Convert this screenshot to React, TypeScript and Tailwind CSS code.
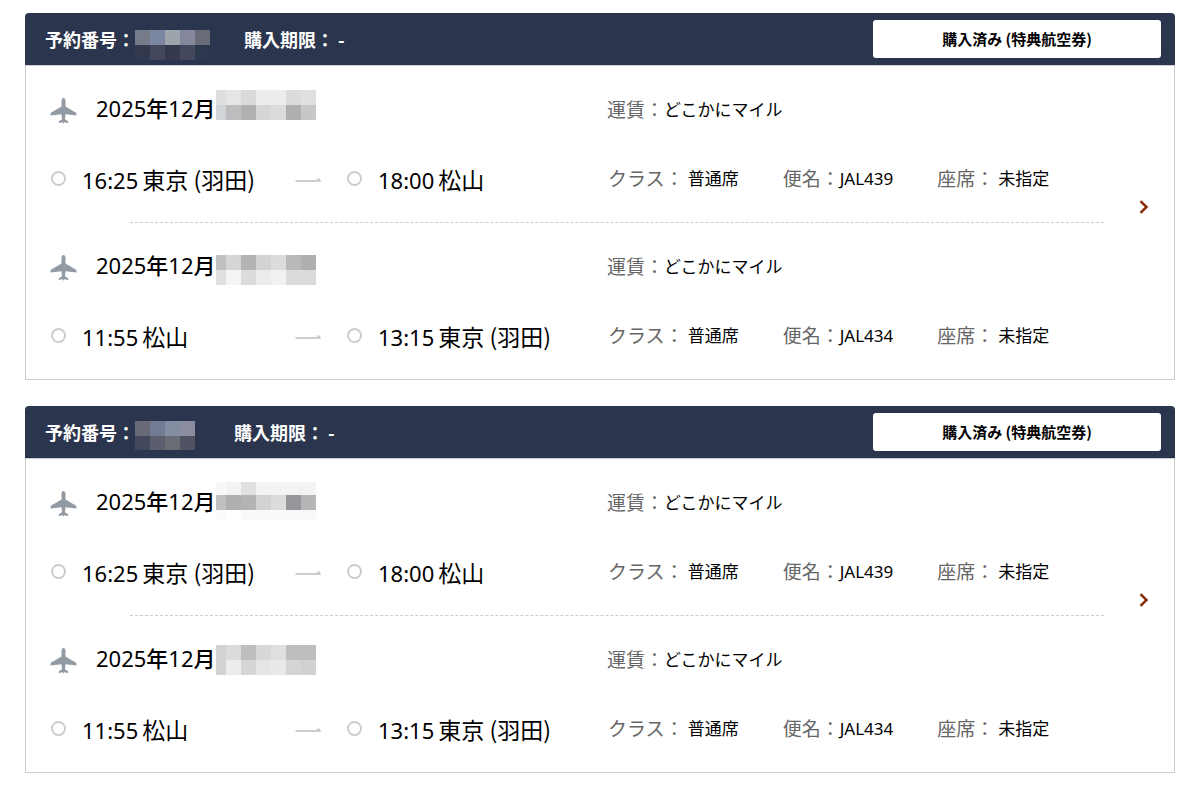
import React from "react";

type MosaicData = { cols: number[]; rows: number[]; colors: string[][]; className: string };

type Leg = {
  year: string;
  month: string;
  fare: string;
  from: string;
  departs: string;
  to: string;
  arrives: string;
  cabin: string;
  flight: string;
  seat: string;
  mask: MosaicData;
};

type Booking = { id: string; mask: MosaicData; maskWidth: string; legs: Leg[] };

const DATE_COLS = [10, 15, 15, 15, 15, 15, 15];

const outbound = {
  year: "2025",
  month: "12",
  fare: "どこかにマイル",
  departs: "16:25",
  from: "東京 (羽田)",
  arrives: "18:00",
  to: "松山",
  cabin: "普通席",
  flight: "JAL439",
  seat: "未指定",
};

const inbound = {
  year: "2025",
  month: "12",
  fare: "どこかにマイル",
  departs: "11:55",
  from: "松山",
  arrives: "13:15",
  to: "東京 (羽田)",
  cabin: "普通席",
  flight: "JAL434",
  seat: "未指定",
};

const bookings: Booking[] = [
  {
    id: "a",
    maskWidth: "w-[109px]",
    mask: {
      cols: [15, 15, 15, 15, 15],
      rows: [15, 15],
      className: "top-0",
      colors: [
        ["#757b88", "#7b87a2", "#9da4ac", "#85879d", "#686c78"],
        ["#32394e", "#43485c", "#34394d", "#43485c", "#2d374e"],
      ],
    },
    legs: [
      {
        ...outbound,
        mask: {
          cols: DATE_COLS,
          rows: [15, 15],
          className: "top-0",
          colors: [
            ["#dededf", "#e5e5e6", "#dadadb", "#ececed", "#ececed", "#dbdbdb", "#e0e0de"],
            ["#d2d5d7", "#bdbdc0", "#b2b0b3", "#d5d7d6", "#dcdcdd", "#b0aeb1", "#c5c7c8"],
          ],
        },
      },
      {
        ...inbound,
        mask: {
          cols: DATE_COLS,
          rows: [15, 15],
          className: "top-2",
          colors: [
            ["#bfc0c2", "#d5d7d6", "#b5b3b6", "#d1d4d3", "#dcdcdd", "#b9b8ba", "#b0aeb1"],
            ["#e0e1df", "#f4f4f4", "#dcdcdc", "#ececec", "#f1f1f1", "#dbdbdb", "#dbdbdb"],
          ],
        },
      },
    ],
  },
  {
    id: "b",
    maskWidth: "w-[99px]",
    mask: {
      cols: [15, 15, 15, 15],
      rows: [15, 14],
      className: "-top-0.5",
      colors: [
        ["#686b76", "#717c94", "#828da2", "#8a8da0"],
        ["#43485c", "#5b5f6d", "#6a6c75", "#505462"],
      ],
    },
    legs: [
      {
        ...outbound,
        mask: {
          cols: DATE_COLS,
          rows: [13, 15, 10],
          className: "-top-px",
          colors: [
            ["#f8f8f9", "#f3f3f3", "#e0e0de", "#f3f3f3", "#f3f3f3", "#f3f3f3", "#f3f3f3"],
            ["#bfc0c2", "#b0aeb1", "#b5b3b5", "#d1d2d4", "#dcdcdd", "#95979a", "#b7b5b8"],
            ["#fcfcfe", "#ffffff", "#f9f9f9", "#f9f9f9", "#f9f9f9", "#f9f9f9", "#f9f9f9"],
          ],
        },
      },
      {
        ...inbound,
        mask: {
          cols: DATE_COLS,
          rows: [15, 15],
          className: "top-[5px]",
          colors: [
            ["#d0d2d4", "#dbdbdb", "#bdbec0", "#d8d8d9", "#e0e0de", "#bdbec0", "#bdbec0"],
            ["#d0d2d4", "#ececec", "#d5d7d6", "#e5e5e6", "#e9e9e9", "#d4d6d5", "#d0d1d3"],
          ],
        },
      },
    ],
  },
];

const sum = (values: number[]) => values.reduce((a, b) => a + b, 0);

function Mosaic({ cols, rows, colors, className }: MosaicData) {
  const width = sum(cols);
  const height = sum(rows);
  return (
    <svg
      aria-hidden="true"
      width={width}
      height={height}
      viewBox={`0 0 ${width} ${height}`}
      shapeRendering="crispEdges"
      className={`absolute left-0 max-w-none ${className}`}
    >
      {colors.map((line, r) =>
        line.map((fill, c) => (
          <rect
            key={`${r}-${c}`}
            x={sum(cols.slice(0, c))}
            y={sum(rows.slice(0, r))}
            width={cols[c]}
            height={rows[r]}
            fill={fill}
          />
        )),
      )}
    </svg>
  );
}

function PlaneIcon() {
  return (
    <svg aria-hidden="true" width="27" height="26" viewBox="0 0 27 26" fill="#929ba3" className="mt-1.5 shrink-0">
      <path d="M13.500 0c1.200 0 2 1.400 2 3v5.600l10.200 6c.6.4.9 1 .8 3L15.500 16.200l-.5 5 3 2c.3.300.4.800.4 1.700L14.200 24.300 13.500 26l-.7-1.700-4.200.6c0-.9.1-1.400.4-1.700l3-2-.5-5L.5 17.600c-.1-2 .2-2.600.8-3l10.200-6V3c0-1.600.8-3 2-3z" />
    </svg>
  );
}

function Dot() {
  return <span className="mb-1 size-[15px] shrink-0 rounded-full border-2 border-[#cccccc]" />;
}

function Arrow() {
  return (
    <svg aria-hidden="true" width="26" height="6" viewBox="0 0 26 6" fill="#cccccc" className="shrink-0">
      <path d="M.5 3H22l-.5-1.500h3l1.200 2V5H.5z" />
    </svg>
  );
}

function Stop({ time, place }: { time: string; place: string }) {
  return (
    <div className="flex items-center gap-4">
      <Dot />
      <span className="flex items-baseline gap-1">
        <time className="text-[22px]">{time}</time>
        <span className="font-['Noto_Sans_CJK_JP',sans-serif] text-[23px] leading-8">{place}</span>
      </span>
    </div>
  );
}

function Detail({ label, value, spaced }: { label: string; value: string; spaced?: boolean }) {
  return (
    <div className={spaced ? "flex items-center gap-1" : "flex items-center"}>
      <dt className="text-[19px] text-[#666666]">{label}：</dt>
      <dd className="text-[17px]">{value}</dd>
    </div>
  );
}

function LegRow({ leg }: { leg: Leg }) {
  return (
    <li className="grid grid-cols-[581fr_497fr] gap-y-9 py-6">
      <div className="flex h-9 items-center gap-[19px] pl-6">
        <PlaneIcon />
        <h3 className="flex h-9 items-center text-[22px] font-normal">
          <span>
            {leg.year}
            <span className="font-medium">年</span>
            {leg.month}
            <span className="font-medium">月</span>
          </span>
          <span className="relative h-9 w-[100px]">
            <Mosaic {...leg.mask} />
          </span>
        </h3>
      </div>
      <dl className="flex h-9 items-center pt-1">
        <Detail label="運賃" value={leg.fare} />
      </dl>
      <div className="flex h-9 items-center pl-[25px]">
        <div className="w-[244px]">
          <Stop time={leg.departs} place={leg.from} />
        </div>
        <Arrow />
        <div className="pl-[26px]">
          <Stop time={leg.arrives} place={leg.to} />
        </div>
      </div>
      <dl className="flex h-9 items-center gap-11 pb-0.5 pl-px">
        <Detail label="クラス" value={leg.cabin} spaced />
        <Detail label="便名" value={leg.flight} />
        <Detail label="座席" value={leg.seat} spaced />
      </dl>
    </li>
  );
}

function BookingCard({ booking }: { booking: Booking }) {
  return (
    <article>
      <header className="flex h-[52px] items-center justify-between rounded-t-sm bg-[#2b354d] pr-[14px] pl-5 font-['Noto_Sans_CJK_JP',sans-serif] text-[18px] font-bold text-white">
        <div className="flex items-center">
          <span>予約番号：</span>
          <span className={`relative h-[18px] ${booking.maskWidth}`}>
            <Mosaic {...booking.mask} />
          </span>
          <span>購入期限： -</span>
        </div>
        <span className="flex h-[38px] w-72 items-center justify-center rounded-[3px] bg-white text-[15px] text-black">
          購入済み (特典航空券)
        </span>
      </header>
      <div className="flex items-center border border-[#cccccc]">
        <ul className="min-w-0 flex-1">
          <LegRow leg={booking.legs[0]} />
          <li aria-hidden="true" className="ml-[104px] border-t border-dashed border-[#cccccc]" />
          <LegRow leg={booking.legs[1]} />
        </ul>
        <a href="#" aria-label="予約詳細" className="flex w-[70px] justify-center pb-8 pl-[10px]">
          <svg aria-hidden="true" width="10" height="14" viewBox="0 0 10 14" fill="none" stroke="#8a2b06" strokeWidth="2.500">
            <path d="M1.500 1.200 7.500 7l-6 5.800" />
          </svg>
        </a>
      </div>
    </article>
  );
}

export default function App() {
  return (
    <main className="flex min-h-screen flex-col gap-[26px] bg-white px-[25px] pt-[13px] pb-6 font-['Noto_Sans','Noto_Sans_CJK_JP',sans-serif] text-black">
      {bookings.map((booking) => (
        <BookingCard key={booking.id} booking={booking} />
      ))}
    </main>
  );
}
